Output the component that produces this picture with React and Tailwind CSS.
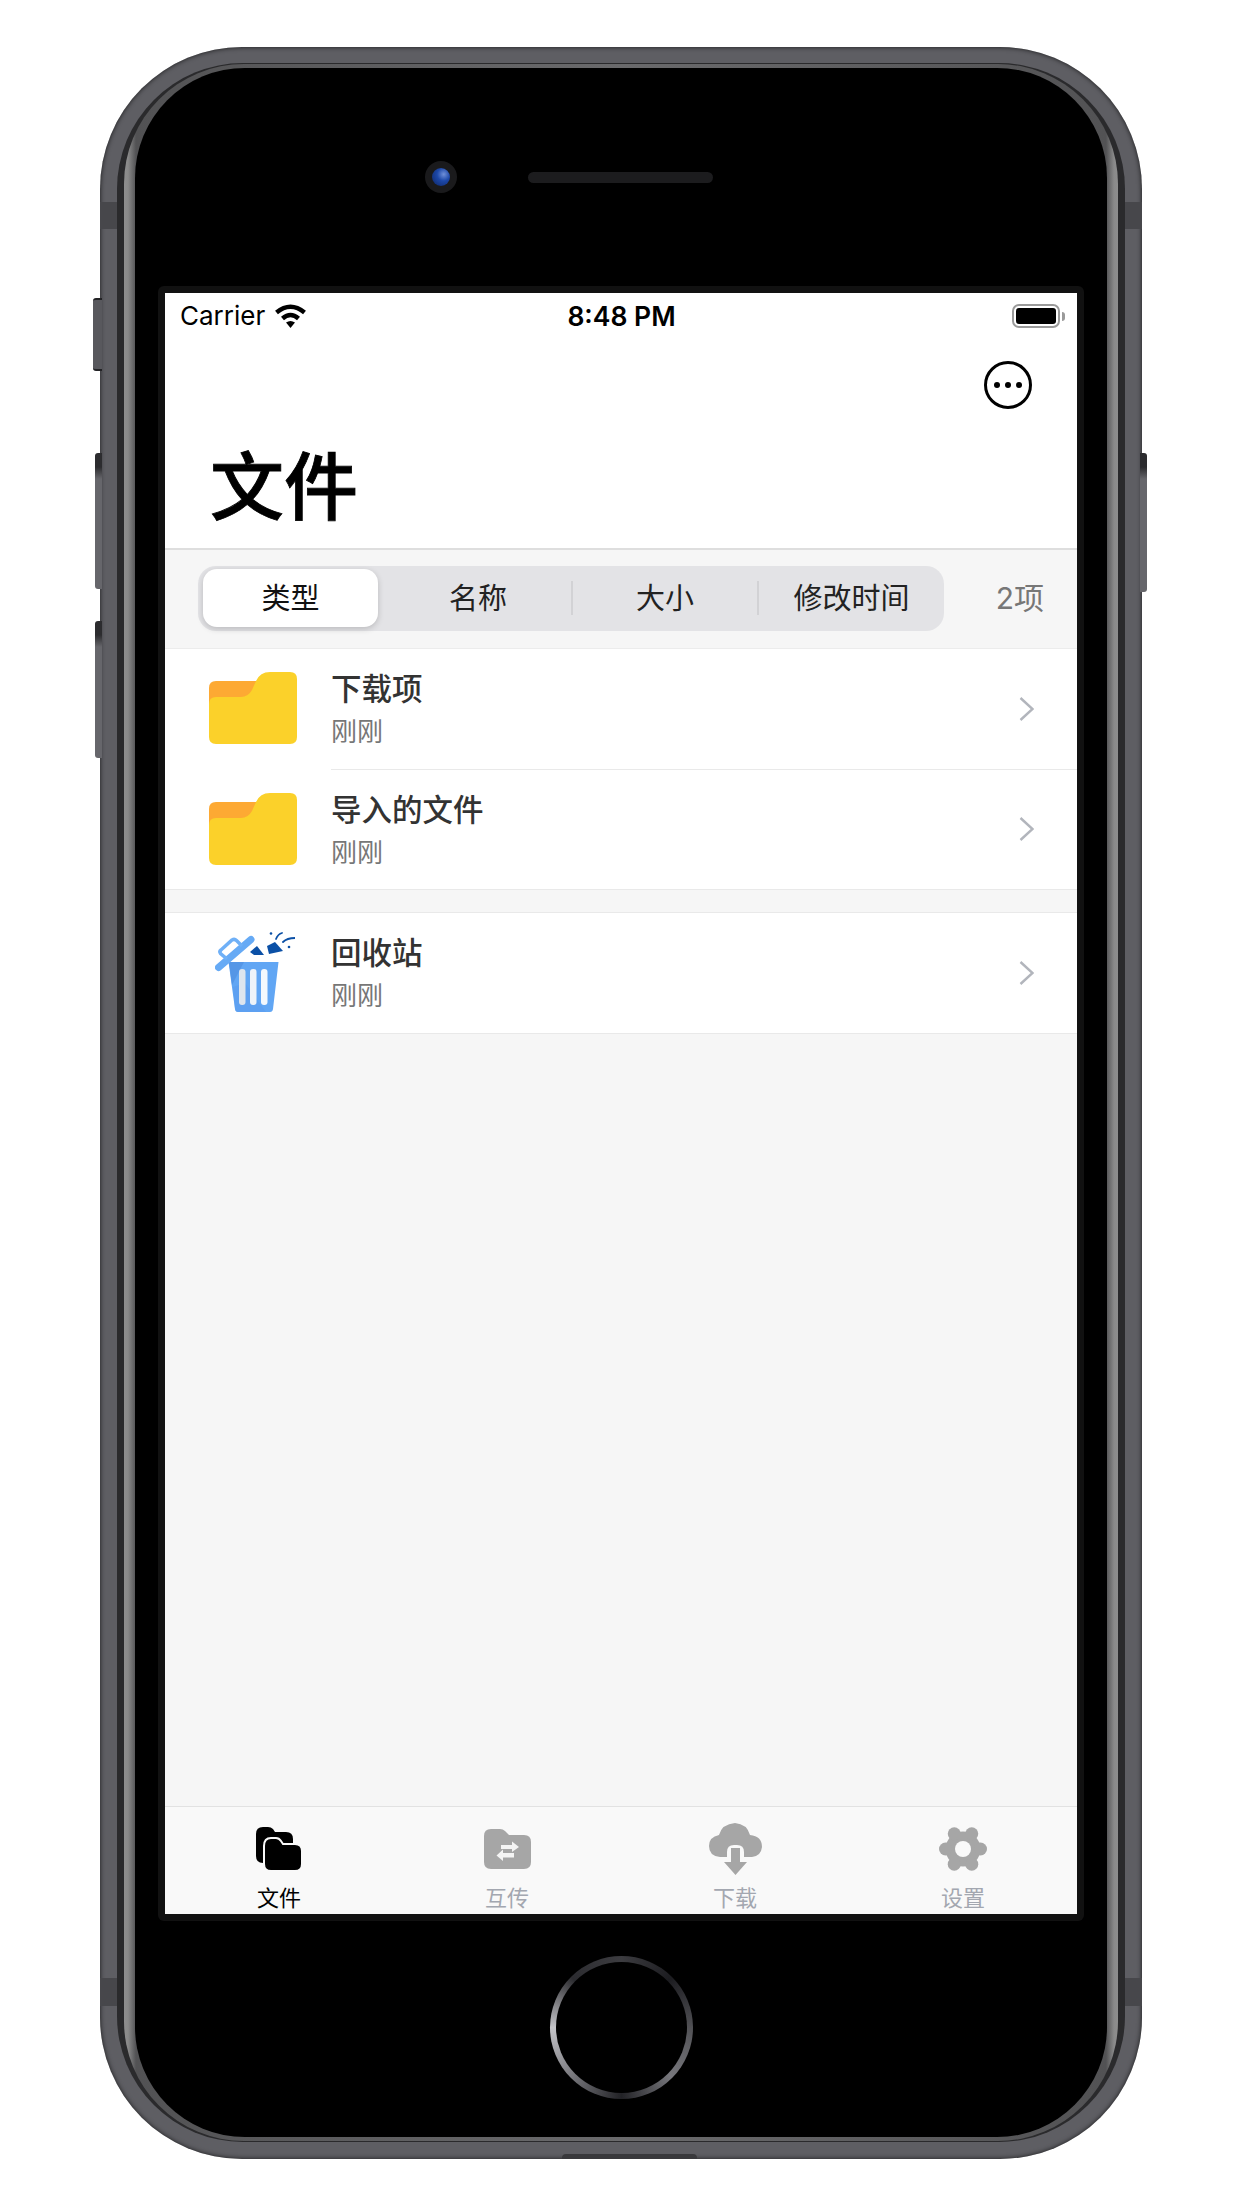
const SEGMENTS = [
  { label: '类型', width: 'w-[187px]', active: true },
  { label: '名称', width: 'w-[186px]' },
  { label: '大小', width: 'w-[184px]', divider: true },
  { label: '修改时间', width: 'w-[185px]', divider: true },
]

function Folder({ className }) {
  return (
    <svg width="88" height="72" viewBox="0 0 88 72" className={`ml-[44px] shrink-0 ${className}`}>
      <path d="M0 30V16Q0 9 7 9H58V34H0Z" fill="#FDA933" />
      <path d="M0 32Q0 25 7 25H32Q39 25 43 18L47 9Q51 0 61 0H81Q88 0 88 7V65Q88 72 81 72H7Q0 72 0 65Z" fill="#FBD12A" />
    </svg>
  )
}

function Trash() {
  return (
    <svg width="80" height="82" viewBox="15 11 80 82" className="ml-[50px] shrink-0">
      <path d="M28.5 41H78.5L73 88Q72.6 91 70 91H38Q35.4 91 35 88Z" fill="#61A6F4" />
      <path d="M29 41H44L32 64Z" fill="#5596E6" />
      <path d="M45 62L66 91H38Q35.4 91 35 88L33 66Z" fill="#5A9DEE" opacity="0.6" />
      <rect x="39" y="48" width="6.5" height="36" rx="3" fill="#DDE5EE" />
      <rect x="50" y="48" width="6.5" height="36" rx="3" fill="#EEF3F9" />
      <rect x="61" y="48" width="6.5" height="36" rx="3" fill="#F3F8FD" />
      <path d="M18.5 46.5L51 18.5" stroke="#66AAF5" strokeWidth="7" strokeLinecap="round" />
      <path d="M27 38L20.5 32.5Q19 30.5 21 29L32 19Q34.5 17.5 36.5 19.5L42 25" fill="none" stroke="#6FB0F7" strokeWidth="3.5" />
      <path d="M50 31L57 25L64 34L54 34Z" fill="#0B50A6" />
      <path d="M67 25L75 21L83 30L69 33Z" fill="#0B50A6" />
      <path d="M76 18Q78 13 82 12M83 21Q87 17 95 17" fill="none" stroke="#0B50A6" strokeWidth="1.8" strokeLinecap="round" />
      <circle cx="71" cy="12.5" r="1.3" fill="#0B50A6" />
      <circle cx="89" cy="26" r="1.3" fill="#0B50A6" />
    </svg>
  )
}

function Row({ icon, title, height, rule, className = '' }) {
  return (
    <div className={`flex bg-white ${height} ${className}`}>
      <div className="w-[166px] shrink-0 flex items-center">{icon}</div>
      <div className={`flex-1 flex items-center justify-between pr-[43px] ${rule ? 'border-b border-[#e9e9e9]' : ''}`}>
        <div className="self-start pt-[20px]">
          <div className="text-[30.5px] leading-[40px] font-medium text-[#333333]">{title}</div>
          <div className="text-[26px] leading-[44px] mt-px text-[#777777]">刚刚</div>
        </div>
        <svg width="15" height="26" viewBox="0 0 15 26" className="mt-[-1px]">
          <path d="M1.5 2L13.5 13L1.5 24" fill="none" stroke="#B2B5BC" strokeWidth="2.4" />
        </svg>
      </div>
    </div>
  )
}

function FilesIcon() {
  return (
    <svg width="48" height="46" viewBox="0 0 48 46">
      <path d="M1 8Q1 1 8 1H13Q16 1 18 3L20 6H31Q38 6 38 13V30Q38 37 31 37H8Q1 37 1 30Z" fill="#000" />
      <path d="M9 20Q9 12 16 12H21Q24 12 26 15L28 18H40Q47 18 47 25V38Q47 45 40 45H16Q9 45 9 38Z" fill="#000" stroke="#f9f9f9" strokeWidth="2" />
    </svg>
  )
}

function TransferIcon() {
  return (
    <svg width="47" height="40" viewBox="0 0 47 40">
      <path d="M0 7Q0 0 7 0H16Q19 0 21 2L25 6H40Q47 6 47 13V33Q47 40 40 40H7Q0 40 0 33Z" fill="#A6A6A6" />
      <path d="M17 16H28V12.5L35 18L28 23V20H17Z" fill="#f4f4f4" />
      <path d="M30 24H19V20.5L12.5 26.5L19 32V28.5H30Z" fill="#f4f4f4" />
    </svg>
  )
}

function DownloadIcon() {
  return (
    <svg width="53" height="52" viewBox="0 0 53 52">
      <path d="M11 34Q0 33 0 23Q0 14 10 12Q13 1 26 0Q38 1 41 12Q53 13 53 24Q52 33 43 34H35V29Q35 22 28 22H25Q18 22 18 29V34Z" fill="#A6A6A6" />
      <path d="M22 25H31V39H38L26.5 52L15 39H22Z" fill="#A6A6A6" />
    </svg>
  )
}

function SettingsIcon() {
  return (
    <svg width="48" height="46" viewBox="0 0 48 46">
      <circle cx="24" cy="23" r="17.5" fill="#A6A6A6" />
      <circle cx="41.5" cy="23" r="6.5" fill="#A6A6A6" />
      <circle cx="6.5" cy="23" r="6.5" fill="#A6A6A6" />
      <circle cx="32.75" cy="38.16" r="6.5" fill="#A6A6A6" />
      <circle cx="15.25" cy="38.16" r="6.5" fill="#A6A6A6" />
      <circle cx="32.75" cy="7.84" r="6.5" fill="#A6A6A6" />
      <circle cx="15.25" cy="7.84" r="6.5" fill="#A6A6A6" />
      <circle cx="24" cy="23" r="8" fill="#f9f9f9" />
    </svg>
  )
}

function Tab({ icon, label, active }) {
  return (
    <div className="flex-1 flex flex-col items-center pt-[16px]">
      <div className="h-[52px] flex items-center justify-center">{icon}</div>
      <div className={`mt-[12px] text-[22px] leading-[22px] ${active ? 'text-black' : 'text-[#a3a7b0]'}`}>{label}</div>
    </div>
  )
}

function Screen() {
  return (
    <div className="w-[912px] h-[1621px] flex flex-col overflow-hidden bg-[#f6f6f6]">
      {/* Header */}
      <div className="bg-white border-b-2 border-[#dedede] pb-[21px]">
        <div className="h-[46px] grid grid-cols-3 items-center pl-[15px] pr-[12px]">
          <div className="flex items-center gap-[9px]">
            <span className="text-[26px] leading-none text-black">Carrier</span>
            <svg width="33" height="24" viewBox="0 0 33 24">
              <path d="M2.5 8.5Q16.5 -3 30.5 8.5" fill="none" stroke="#000" strokeWidth="4.5" />
              <path d="M8.5 14.5Q16.5 7.5 24.5 14.5" fill="none" stroke="#000" strokeWidth="4.5" />
              <path d="M12 18.5Q16.5 15.5 21 18.5L16.5 24Z" fill="#000" />
            </svg>
          </div>
          <div className="text-center text-[26.5px] leading-none font-semibold text-black pr-[2px]">8:48 PM</div>
          <div className="flex items-center justify-end gap-[2px]">
            <div className="w-[48px] h-[24px] rounded-[7px] border-2 border-[#9a9a9a] p-[2px]">
              <div className="w-full h-full rounded-[3px] bg-black" />
            </div>
            <div className="w-[3px] h-[9px] rounded-r-full bg-[#9a9a9a]" />
          </div>
        </div>
        <div className="mt-[22px] flex justify-end pr-[45px]">
          <svg width="48" height="48" viewBox="0 0 48 48">
            <circle cx="24" cy="24" r="22.5" fill="none" stroke="#000" strokeWidth="3" />
            <circle cx="13" cy="24" r="3" fill="#000" />
            <circle cx="24" cy="24" r="3" fill="#000" />
            <circle cx="35" cy="24" r="3" fill="#000" />
          </svg>
        </div>
        <div className="mt-[38px] pl-[45px] text-[74px] leading-[80px] font-medium [-webkit-text-stroke:0.8px_#000] text-black">文件</div>
      </div>

      {/* Sort bar */}
      <div className="h-[99px] shrink-0 flex items-center justify-between pl-[33px] pr-[33px] border-b border-[#ececec]">
        <div className="w-[746px] h-[65px] mt-[-2px] flex items-center rounded-[18px] bg-[#e3e3e6]">
          {SEGMENTS.map(s => (
            <div key={s.label} className="contents">
              {s.divider && <div className="w-[2px] h-[34px] shrink-0 bg-[#d2d2d5]" />}
              <div className={`${s.width} shrink-0 h-full flex items-center justify-center`}>
                {s.active ? (
                  <div className="w-[175px] h-[58px] ml-[-2px] self-start mt-[3px] pt-[3px] flex items-center justify-center rounded-[14px] bg-white shadow-[0_2px_6px_rgba(0,0,0,0.18)] text-[29px] text-[#111111]">
                    {s.label}
                  </div>
                ) : (
                  <span className="pt-[2px] text-[29px] text-[#222222]">{s.label}</span>
                )}
              </div>
            </div>
          ))}
        </div>
        <span className="mt-[-2px] text-[30px] text-[#777777]">2项</span>
      </div>

      {/* List */}
      <Row icon={<Folder className="mt-[-3px]" />} title="下载项" height="h-[121px]" rule />
      <Row icon={<Folder className="mt-[-2px]" />} title="导入的文件" height="h-[120px]" className="border-b border-[#e9e9e9]" />
      <Row icon={<Trash />} title="回收站" height="h-[122px]" className="mt-[22px] border-y border-[#e9e9e9]" />

      <div className="flex-1" />

      {/* Tab bar */}
      <div className="h-[108px] shrink-0 flex bg-[#f9f9f9] border-t border-[#e2e2e2]">
        <Tab icon={<FilesIcon />} label="文件" active />
        <Tab icon={<TransferIcon />} label="互传" />
        <Tab icon={<DownloadIcon />} label="下载" />
        <Tab icon={<SettingsIcon />} label="设置" />
      </div>
    </div>
  )
}

export default function App() {
  return (
    <div lang="zh-CN" className="w-[1242px] h-[2208px] overflow-hidden bg-white pt-[47px] font-['Inter','Noto_Sans_CJK_SC',sans-serif]">
      <div className="relative w-[1042px] h-[2112px] mx-auto rounded-[142px] bg-[#5e5e63] shadow-[inset_0_0_5px_rgba(0,0,0,0.75)] px-[17px] pt-[16px] pb-[17px]">
        {/* Side buttons */}
        <div className="absolute left-[-7px] top-[251px] w-[9px] h-[73px] rounded-l-[3px] border-y-2 border-[#222225] bg-[#58585d]" />
        <div className="absolute left-[-5px] top-[406px] w-[7px] h-[136px] rounded-l-[3px] bg-[linear-gradient(to_bottom,#2c2c2f_0,#2c2c2f_14px,#66666b_26px,#66666b_100%)]" />
        <div className="absolute left-[-5px] top-[574px] w-[7px] h-[137px] rounded-l-[3px] bg-[linear-gradient(to_bottom,#2c2c2f_0,#2c2c2f_14px,#66666b_26px,#66666b_100%)]" />
        <div className="absolute right-[-5px] top-[406px] w-[7px] h-[139px] rounded-r-[3px] bg-[linear-gradient(to_bottom,#2c2c2f_0,#2c2c2f_14px,#66666b_26px,#66666b_100%)]" />

        {/* Antenna bands */}
        <div className="absolute left-0 top-[155px] w-[17px] h-[27px] bg-[#47474b]" />
        <div className="absolute right-0 top-[155px] w-[17px] h-[27px] bg-[#47474b]" />
        <div className="absolute left-0 top-[1931px] w-[17px] h-[28px] bg-[#47474b]" />
        <div className="absolute right-0 top-[1931px] w-[17px] h-[28px] bg-[#47474b]" />
        <div className="absolute left-[462px] bottom-0 w-[135px] h-[5px] rounded-t-[4px] bg-[#39393c]" />

        <div className="w-full h-full rounded-[126px] bg-[#2a2a2c] px-[7px] py-px">
          <div className="w-full h-full rounded-[120px] px-[11px] py-[4px] bg-[linear-gradient(to_right,#8e8e8e_0,#8a8a8a_4px,#525254_12px,#6a6a6c_50%,#525254_calc(100%-12px),#8a8a8a_calc(100%-4px),#8e8e8e_100%)]">
            <div className="w-full h-full rounded-[110px] bg-black flex flex-col items-center">
              {/* Top bezel */}
              <div className="w-full h-[218px] flex items-center pl-[290px] gap-[71px]">
                <div className="w-[32px] h-[32px] rounded-full bg-[#1a1a1c] flex items-center justify-center">
                  <div className="w-[18px] h-[18px] rounded-full bg-[radial-gradient(circle_at_65%_35%,#6f8fd8_0,#1c47a8_40%,#0d2460_100%)]" />
                </div>
                <div className="w-[185px] h-[11px] rounded-full bg-[#1c1c1e]" />
              </div>
              {/* Screen */}
              <div className="p-[7px] rounded-[6px] bg-[#111111]">
                <Screen />
              </div>
              {/* Home button */}
              <div className="w-full flex-1 flex items-center justify-center pb-[4px]">
                <div className="w-[143px] h-[143px] rounded-full p-[6px] bg-[conic-gradient(#3c3c40_0deg,#1c1c20_45deg,#56565a_95deg,#77777c_135deg,#222226_180deg,#77777c_225deg,#c4c4c8_270deg,#2c2c30_315deg,#3c3c40_360deg)]">
                  <div className="w-full h-full rounded-full bg-black" />
                </div>
              </div>
            </div>
          </div>
        </div>
      </div>
    </div>
  )
}
